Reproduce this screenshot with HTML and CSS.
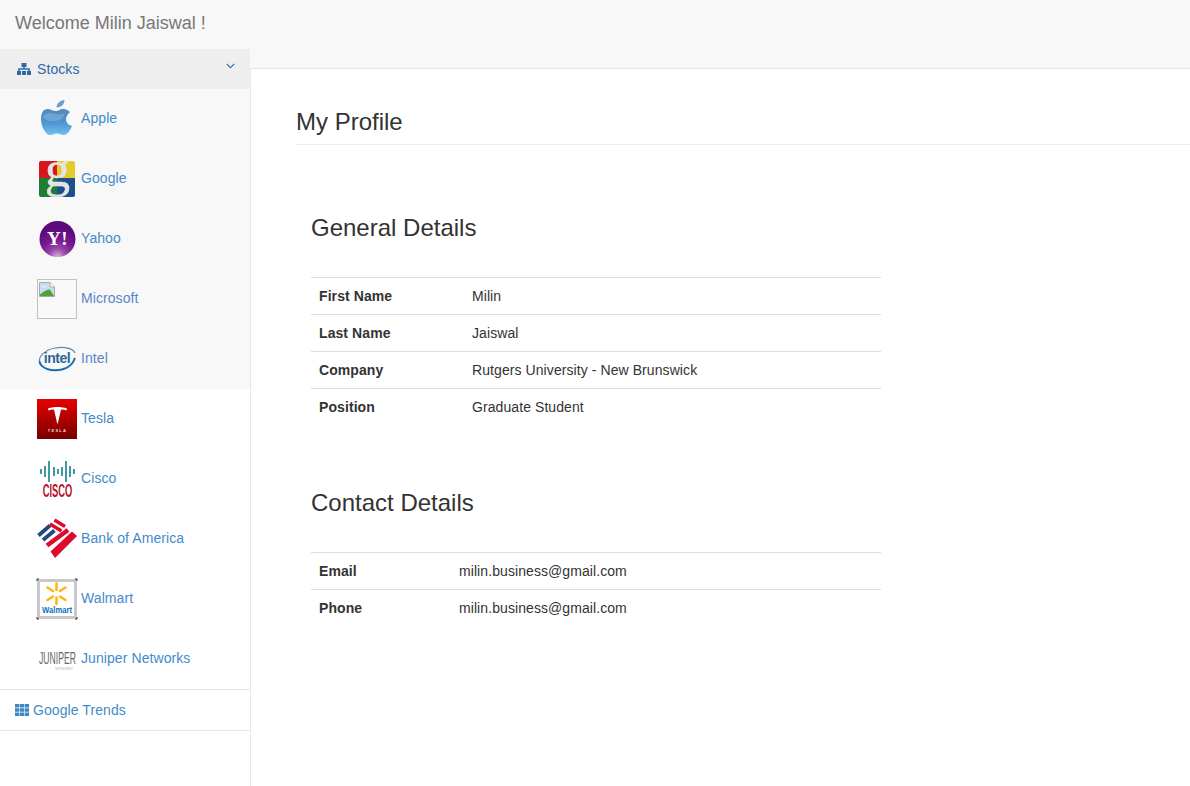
FILE: index.html
```html
<!doctype html>

<html lang="en">
    <head>
        <meta charset="utf-8">
        <title>My Profile</title>
        <link rel="stylesheet" href="styles.css">
    </head>
    <body>
        <div class="left-col">
            <div class="brand">Welcome Milin Jaiswal !</div>
            <nav class="side-nav">
                <a class="nav-head" href="#">
                    <span class="nav-label">
                        <svg class="sitemap-icon" viewBox="0 0 14 12" width="14" height="12">
                            <rect x="4.500" y="0" width="5" height="4" fill="#2f6aa5"/>
                            <path d="M7 3v3.500M2 8V6h10v2" fill="none" stroke="#2f6aa5" stroke-width="1.500"/>
                            <rect x="0" y="8" width="4" height="4" fill="#2f6aa5"/>
                            <rect x="5" y="8" width="4" height="4" fill="#2f6aa5"/>
                            <rect x="10" y="8" width="4" height="4" fill="#2f6aa5"/>
                        </svg>
                        Stocks
                    </span>
                    <svg class="chevron" viewBox="0 0 9 6" width="9" height="6">
                        <path d="M.7.8l3.8 3.8L8.300.8" fill="none" stroke="#2f6aa5" stroke-width="1.100"/>
                    </svg>
                </a>
                <ul class="stock-list">
                    <li>
                        <a href="#">
                            <svg class="logo" viewBox="0 0 40 40">
                                <defs>
                                    <linearGradient id="apple-fill" x1="0" y1="0" x2="0" y2="1">
                                        <stop offset="0" stop-color="#5489bd"/>
                                        <stop offset="0.5" stop-color="#4f93d0"/>
                                        <stop offset="1" stop-color="#6cc0f2"/>
                                    </linearGradient>
                                </defs>
                                <path d="M19 12C15.500 12 13.500 10 10.500 10C6.500 10 4 14 4 20C4 28 9 36 13 36C16 36 17 34.500 20 34.500C23 34.500 24 36 27 36C30 36 33.500 31 35 27C31.500 26 29 23.500 29 20C29 17 31 15 33 13C30.500 10.500 27.500 10 25.500 10C23 10 21.500 12 19 12Z" fill="url(#apple-fill)"/>
                                <path d="M19.500 8.500C19.500 4.500 23 1.500 27.500 1C27.500 5 24 8.500 19.500 8.500Z" fill="#6b9ccb"/>
                                <path d="M6 18C8 13 14 13.500 19 15C23 16 26 15 28 14C26 19 24 22 17 22C11 22 8 21 6 18Z" fill="#a9cbe8" opacity="0.35"/>
                            </svg>
                            <span class="stock-name">Apple</span>
                        </a>
                    </li>
                    <li>
                        <a href="#">
                            <svg class="logo" viewBox="0 0 40 40">
                                <path d="M4 2H20V19H2V4Q2 2 4 2Z" fill="#d8171c"/>
                                <path d="M20 2H36Q38 2 38 4V19H20Z" fill="#e6c92c"/>
                                <path d="M2 19H20V38H4Q2 38 2 36Z" fill="#1f7d34"/>
                                <path d="M20 19H38V36Q38 38 36 38H20Z" fill="#1e4f8c"/>
                                <text class="logo-g" x="20.500" y="27" text-anchor="middle">g</text>
                            </svg>
                            <span class="stock-name">Google</span>
                        </a>
                    </li>
                    <li>
                        <a href="#">
                            <svg class="logo" viewBox="0 0 40 40">
                                <defs>
                                    <radialGradient id="yahoo-fill" cx="0.5" cy="1" r="0.8">
                                        <stop offset="0" stop-color="#d8b2dd"/>
                                        <stop offset="0.3" stop-color="#9748ab"/>
                                        <stop offset="0.6" stop-color="#7a1a92"/>
                                        <stop offset="1" stop-color="#5c0a7c"/>
                                    </radialGradient>
                                </defs>
                                <circle cx="20.500" cy="20" r="18" fill="url(#yahoo-fill)"/>
                                <text class="logo-yahoo" x="20.500" y="26" text-anchor="middle">Y!</text>
                            </svg>
                            <span class="stock-name">Yahoo</span>
                        </a>
                    </li>
                    <li class="stock-seen">
                        <a href="#">
                            <svg class="logo" viewBox="0 0 40 40">
                                <rect x="0.500" y="0.500" width="39" height="39" fill="none" stroke="#c0c0c0"/>
                                <path d="M2.500 3.500H13L17.500 8V17.500H2.500Z" fill="#c9dcf7" stroke="#a8a8a8"/>
                                <path d="M5 8C6 6.500 8 6.500 9 8H5Z" fill="#fff"/>
                                <path d="M3 17V15.500C7 12 10 10.500 13 10.500L17 17Z" fill="#4fa236"/>
                                <path d="M13 3.500V8H17.500" fill="#fff" stroke="#a8a8a8"/>
                            </svg>
                            <span class="stock-name">Microsoft</span>
                        </a>
                    </li>
                    <li class="stock-seen">
                        <a href="#">
                            <svg class="logo" viewBox="0 0 40 40">
                                <path d="M38 14C36 9 27 7.500 18 9C8 11 2 17 2.500 22" fill="none" stroke="#5c8ab5" stroke-width="1.200"/>
                                <path d="M2.500 22C3 29 14 33 25 30.500C31 29 36 25 38 19" fill="none" stroke="#1a6cb0" stroke-width="2"/>
                                <text class="logo-intel" x="20" y="24" text-anchor="middle">intel</text>
                            </svg>
                            <span class="stock-name">Intel</span>
                        </a>
                    </li>
                    <li>
                        <a href="#">
                            <svg class="logo" viewBox="0 0 40 40">
                                <defs>
                                    <linearGradient id="tesla-fill" x1="0" y1="0" x2="0" y2="1">
                                        <stop offset="0" stop-color="#e80000"/>
                                        <stop offset="1" stop-color="#760000"/>
                                    </linearGradient>
                                </defs>
                                <rect width="40" height="40" fill="url(#tesla-fill)"/>
                                <path d="M11 9.500C16 7.500 25 7.500 30 9.500L29.500 11.500C28 10.800 26 10.400 24 10.500L20.800 24.500H20.200L17 10.500C15 10.400 13 10.800 11.500 11.500Z" fill="#fff"/>
                                <text class="logo-tesla" x="20.500" y="33" text-anchor="middle">TESLA</text>
                            </svg>
                            <span class="stock-name">Tesla</span>
                        </a>
                    </li>
                    <li>
                        <a href="#">
                            <svg class="logo" viewBox="0 0 40 40">
                                <path d="M4 10v5M8 7v11M12 2v21M17 8v9M21 10v5M25 8v9M29 2v21M33 7v11M37 10v5" fill="none" stroke="#2f8d9c" stroke-width="1.800"/>
                                <text class="logo-cisco" transform="translate(20.500 38) scale(0.52 1)" text-anchor="middle">CISCO</text>
                            </svg>
                            <span class="stock-name">Cisco</span>
                        </a>
                    </li>
                    <li>
                        <a href="#">
                            <svg class="logo" viewBox="0 0 40 40">
                                <path d="M1.500 16.500L13 6.500M6 21L17.500 11.500" fill="none" stroke="#23487f" stroke-width="3.800"/>
                                <path d="M17.500 1L28 7.500M13 5L24.500 12" fill="none" stroke="#dc0a2d" stroke-width="3.400"/>
                                <path d="M10 26.500L31 11" fill="none" stroke="#dc0a2d" stroke-width="4.600"/>
                                <path d="M18 39L13.500 32.500L35 12.500L40 17Z" fill="#dc0a2d"/>
                            </svg>
                            <span class="stock-name">Bank of America</span>
                        </a>
                    </li>
                    <li>
                        <a href="#">
                            <svg class="logo" viewBox="0 0 40 40">
                                <rect x="1.500" y="1.500" width="37" height="37" rx="1.500" fill="#fff" stroke="#c8c8c8" stroke-width="3"/>
                                <path d="M0 2V0H2M38 0H40V2M40 38V40H38M2 40H0V38" fill="none" stroke="#222" stroke-width="1"/>
                                <path d="M19.500 4.500v6.500M19.500 18.500v6.500M10.500 8.500l5.500 3.500M23 17.500l5.500 3.500M28.500 8.500L23 12M16 17.500L10.500 21" fill="none" stroke="#fdb515" stroke-width="2.600" stroke-linecap="round"/>
                                <text class="logo-walmart" transform="translate(20 34) scale(0.85 1)" text-anchor="middle">Walmart</text>
                            </svg>
                            <span class="stock-name">Walmart</span>
                        </a>
                    </li>
                    <li>
                        <a href="#">
                            <svg class="logo" viewBox="0 0 40 40">
                                <text class="logo-juniper" transform="translate(20.500 25) scale(0.54 1)" text-anchor="middle">JUNIPER</text>
                                <text class="logo-juniper-sub" x="27" y="31" text-anchor="middle">NETWORKS</text>
                            </svg>
                            <span class="stock-name">Juniper Networks</span>
                        </a>
                    </li>
                </ul>
                <a class="nav-trends" href="#">
                    <svg class="grid-icon" viewBox="0 0 14 12" width="14" height="12">
                        <path d="M0 0h4.300v3.600H0zM4.900 0h4.300v3.600H4.900zM9.800 0h4.200v3.600H9.800zM0 4.200h4.300v3.600H0zM4.900 4.200h4.300v3.600H4.900zM9.800 4.200h4.200v3.600H9.800zM0 8.400h4.300V12H0zM4.900 8.400h4.300V12H4.900zM9.800 8.400h4.200V12H9.800z" fill="#3f86c6"/>
                    </svg>
                    Google Trends
                </a>
            </nav>
        </div>
        <div class="right-col">
            <div class="top-strip"></div>
            <main class="content">
                <h1 class="page-header">My Profile</h1>
                <section class="details general">
                    <h2>General Details</h2>
                    <table>
                        <tr><th>First Name</th><td>Milin</td></tr>
                        <tr><th>Last Name</th><td>Jaiswal</td></tr>
                        <tr><th>Company</th><td>Rutgers University - New Brunswick</td></tr>
                        <tr><th>Position</th><td>Graduate Student</td></tr>
                    </table>
                </section>
                <section class="details contact">
                    <h2>Contact Details</h2>
                    <table>
                        <tr><th>Email</th><td>milin.business@gmail.com</td></tr>
                        <tr><th>Phone</th><td>milin.business@gmail.com</td></tr>
                    </table>
                </section>
            </main>
        </div>
    </body>
</html>
```

FILE: styles.css
```css
html, body {
    height: 100%;
}
body {
    margin: 0;
    display: grid;
    grid-template-columns: 250px 1fr;
    overflow: hidden;
    background: #fff;
    color: #333;
    font-family: "Liberation Sans", Arial, sans-serif;
    font-size: 14px;
    line-height: 20px;
}
a {
    color: #428bca;
    text-decoration: none;
}

/* Left column: brand and menu */
.brand {
    height: 49px;
    padding: 13px 15px 0;
    box-sizing: border-box;
    background: #f8f8f8;
    color: #777;
    font-size: 18px;
}
.side-nav {
    letter-spacing: 0.08px;
}
.nav-head {
    display: flex;
    justify-content: space-between;
    height: 40px;
    padding: 10px 15px 10px 17px;
    box-sizing: border-box;
    background: #eee;
    color: #2f6aa5;
}
.nav-label {
    display: flex;
    align-items: center;
    gap: 6px;
}
.chevron {
    margin-top: 4px;
}
.stock-list {
    margin: 0;
    padding: 0;
    list-style: none;
    border-bottom: 1px solid #e7e7e7;
}
.stock-list li {
    height: 60px;
}
.stock-list li:nth-child(-n+5) {
    background: #f8f8f8;
}
.stock-list a {
    display: flex;
    align-items: center;
    gap: 4px;
    height: 100%;
    padding-left: 37px;
}
.stock-list .stock-seen a {
    color: #5a86c8;
}
.stock-name {
    /* The names sit a pixel above the middle of the logos. */
    margin-bottom: 2px;
}
.logo {
    width: 40px;
    height: 40px;
    flex: none;
    overflow: visible;
}
.nav-trends {
    display: flex;
    align-items: center;
    gap: 4px;
    height: 41px;
    padding-left: 15px;
    box-sizing: border-box;
    border-bottom: 1px solid #e7e7e7;
}

/* Text inside the drawn logos */
.logo-g {
    fill: #e4e4e4;
    stroke: #e4e4e4;
    stroke-width: 0.5px;
    font-family: "Liberation Serif", serif;
    font-size: 50px;
    letter-spacing: 0;
}
.logo-yahoo {
    fill: #fff;
    font-family: "Liberation Serif", serif;
    font-size: 19px;
    font-weight: bold;
    letter-spacing: 0.5px;
}
.logo-intel {
    fill: #2f6596;
    font-size: 14px;
    font-weight: bold;
    letter-spacing: -0.5px;
}
.logo-tesla {
    fill: #f3d4d4;
    font-size: 4px;
    font-weight: bold;
    letter-spacing: 1.300px;
}
.logo-cisco {
    fill: #b5122c;
    font-size: 18px;
    font-weight: bold;
    letter-spacing: 0;
}
.logo-walmart {
    fill: #0d6fb8;
    font-size: 9px;
    font-weight: bold;
    letter-spacing: 0;
}
.logo-juniper {
    fill: #666;
    font-size: 16px;
    letter-spacing: 0;
}
.logo-juniper-sub {
    fill: #a8b4c0;
    font-size: 3px;
    letter-spacing: 0;
}

/* Right column */
.top-strip {
    height: 69px;
    box-sizing: border-box;
    background: #f8f8f8;
    border-bottom: 1px solid #e7e7e7;
}
.content {
    height: 717px;
    box-sizing: border-box;
    padding: 40px 0 0 45px;
    border-left: 1px solid #e7e7e7;
}
.page-header {
    margin: 0;
    padding-bottom: 9px;
    border-bottom: 1px solid #eee;
    font-size: 24px;
    font-weight: normal;
    line-height: 26px;
}
.details {
    margin-left: 15px;
    width: 570px;
}
.details h2 {
    margin: 0 0 36px;
    font-size: 24px;
    font-weight: normal;
    line-height: 26px;
}
.general {
    margin-top: 70px;
}
.contact {
    margin-top: 65px;
}
table {
    width: 100%;
    border-collapse: collapse;
    letter-spacing: 0.08px;
}
th, td {
    padding: 8px;
    border-top: 1px solid #ddd;
    text-align: left;
}
.general th {
    width: 137px;
}
.contact th {
    width: 124px;
}
```
